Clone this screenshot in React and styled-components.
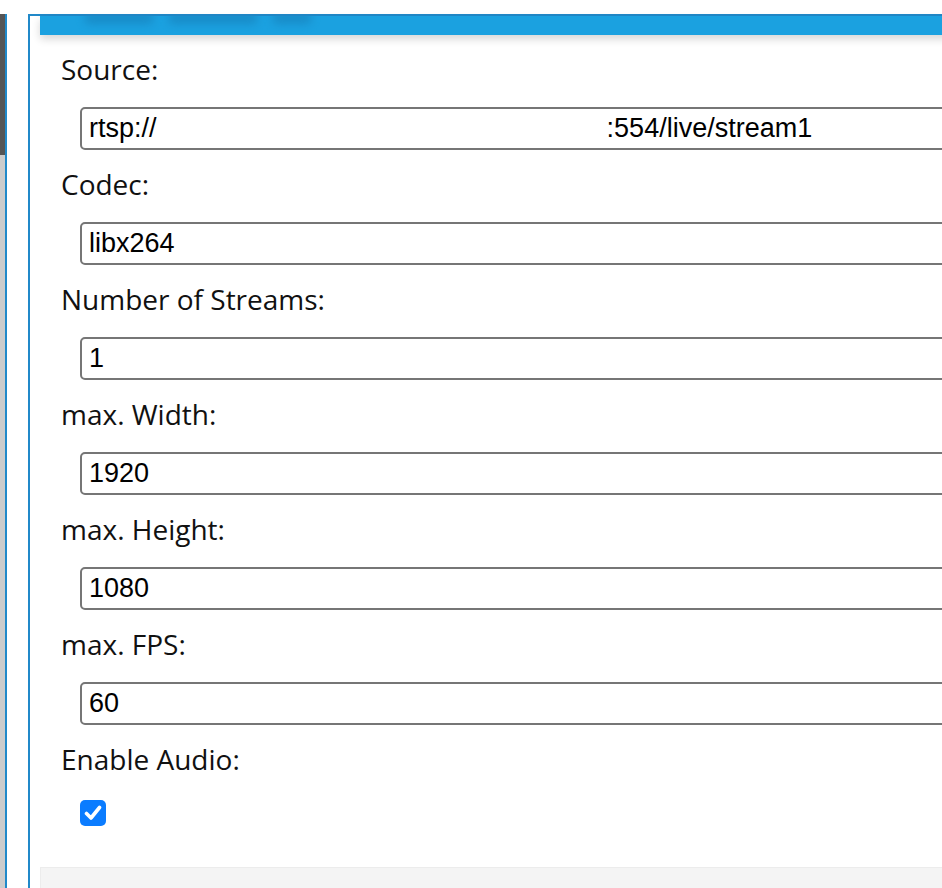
import React from "react";
import styled, { createGlobalStyle } from "styled-components";

const Global = createGlobalStyle`
  html, body { margin: 0; padding: 0; background: #fff; overflow: hidden; }
  body { width: 942px; height: 888px; }
`;

const Page = styled.div`
  display: flex;
  align-items: stretch;
  padding-top: 14px;
  height: 874px;
  width: 1100px;
`;

const Sidebar = styled.div`
  width: 5px;
  border-right: 2px solid #2189c9;
  background: linear-gradient(to bottom, #555555 0, #555555 141px, #cccccc 141px);
  flex: none;
`;

const Panel = styled.div`
  margin-left: 21px;
  flex: 1;
  border-top: 2px solid #2189c9;
  border-left: 2px solid #2189c9;
  padding-left: 10px;
  display: flex;
  flex-direction: column;
`;

const Header = styled.div`
  height: 19px;
  background: #1ba1e0;
  box-shadow: 0 4px 8px rgba(0, 0, 0, 0.16);
  overflow: hidden;
  position: relative;
  z-index: 1;
  display: flex;
  gap: 14px;
  padding-left: 44px;
`;

const Blur = styled.span`
  display: block;
  margin-top: -4px;
  width: ${(p) => p.$w}px;
  height: 12px;
  border-radius: 6px;
  background: #1783be;
  filter: blur(4px);
  opacity: 0.7;
`;

const Form = styled.div`
  padding: 14px 0 0 21px;
  flex: 1;
  display: flex;
  flex-direction: column;
`;

const Field = styled.div`
  display: flex;
  flex-direction: column;
  margin-bottom: 14px;
`;

const Label = styled.label`
  font-family: "Open Sans", sans-serif;
  font-size: 28px;
  line-height: 40px;
  color: #111;
`;

const Input = styled.input`
  box-sizing: border-box;
  margin: 18px 0 0 19px;
  height: 43px;
  width: 1000px;
  border: 2px solid #767676;
  border-radius: 5px;
  padding: 0 0 0 7px;
  font-family: "Liberation Sans", Arial, sans-serif;
  font-size: 27px;
  color: #000;
  background: #fff;
  outline: none;
  white-space: pre;
`;

const CheckBox = styled.span`
  margin: 21px 0 0 19px;
  width: 26px;
  height: 26px;
  border-radius: 5px;
  background: #0b7cff;
  display: flex;
  align-items: center;
  justify-content: center;
`;

const Footer = styled.div`
  margin-top: auto;
  height: 20px;
  background: #f4f4f4;
  border-top: 1px solid #ececec;
  border-left: 1px solid #ececec;
`;

const gap = " ".repeat(60);

const fields = [
  ["Source:", "rtsp://" + gap + ":554/live/stream1"],
  ["Codec:", "libx264"],
  ["Number of Streams:", "1"],
  ["max. Width:", "1920"],
  ["max. Height:", "1080"],
  ["max. FPS:", "60"],
];

export default function App() {
  return (
    <>
      <Global />
      <Page>
        <Sidebar />
        <Panel>
          <Header aria-hidden="true">
            <Blur $w={70} />
            <Blur $w={90} />
            <Blur $w={40} />
          </Header>
          <Form>
            {fields.map(([label, value]) => (
              <Field key={label}>
                <Label>{label}</Label>
                <Input readOnly value={value} />
              </Field>
            ))}
            <Field>
              <Label>Enable Audio:</Label>
              <CheckBox role="checkbox" aria-checked="true">
                <svg width="18" height="16" viewBox="0 0 18 16">
                  <path d="M2.5 8.5 L7 13 L15.5 2.5" fill="none" stroke="#fff" strokeWidth="3.6" strokeLinecap="round" strokeLinejoin="round" />
                </svg>
              </CheckBox>
            </Field>
          </Form>
          <Footer />
        </Panel>
      </Page>
    </>
  );
}
